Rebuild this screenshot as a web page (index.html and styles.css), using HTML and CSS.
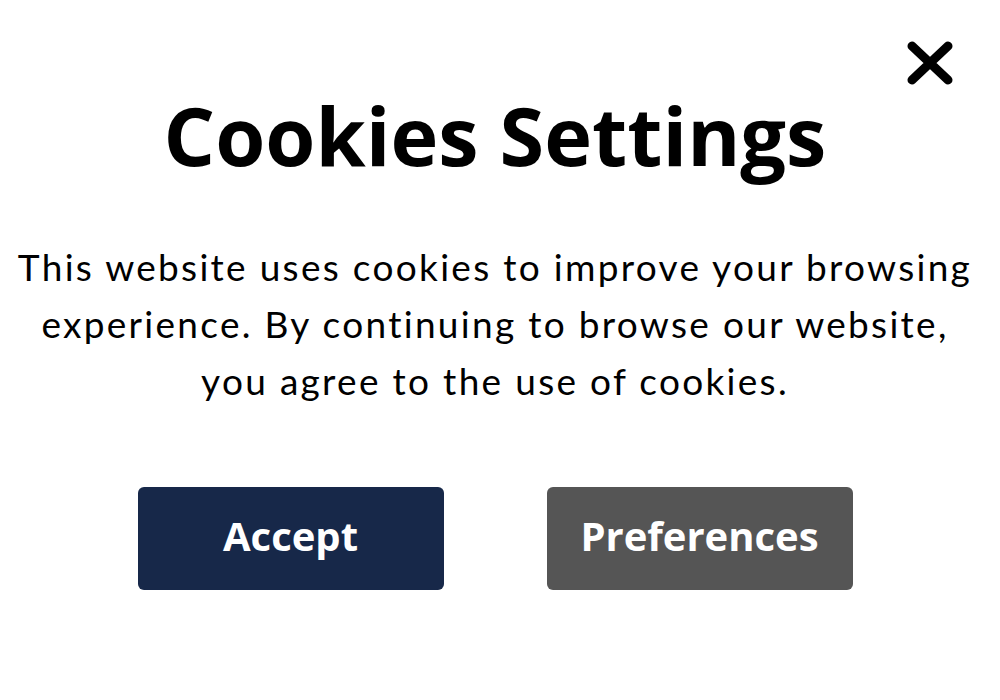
FILE: index.html
```html
<!DOCTYPE html>
<html lang="en">
<head>
<meta charset="utf-8">
<title>Cookies Settings</title>
<link rel="stylesheet" href="styles.css">
</head>
<body>
<div class="modal">
  <button class="close" aria-label="Close">
    <svg width="48" height="44" viewBox="0 0 48 44"><path d="M6 5 L42 39 M42 5 L6 39" stroke="#000" stroke-width="9" stroke-linecap="round" fill="none"/></svg>
  </button>
  <h1 class="title">Cookies Settings</h1>
  <p class="text">This website uses cookies to improve your browsing<br>experience. By continuing to browse our website,<br>you agree to the use of cookies.</p>
  <div class="actions">
    <button class="btn btn-accept">Accept</button>
    <button class="btn btn-prefs">Preferences</button>
  </div>
</div>
</body>
</html>
```
FILE: styles.css
```css
html, body {
  margin: 0;
  padding: 0;
  background: #fff;
}
.modal {
  position: relative;
  width: 990px;
  height: 700px;
  display: flex;
  flex-direction: column;
  align-items: center;
}
.close {
  position: absolute;
  top: 41px;
  left: 906px;
  padding: 0;
  border: 0;
  background: none;
  line-height: 0;
}
.title {
  margin: 85px 0 0;
  font-family: "Open Sans", sans-serif;
  font-weight: 700;
  font-size: 81px;
  line-height: 100px;
  color: #000;
}
.text {
  margin: 53px 0 0;
  width: 990px;
  font-family: "Lato", sans-serif;
  font-size: 37px;
  letter-spacing: 2.3px;
  line-height: 57px;
  text-align: center;
  color: #000;
}
.actions {
  margin-top: 78px;
  display: flex;
  gap: 103px;
}
.btn {
  width: 306px;
  height: 103px;
  padding: 0 0 6px;
  border: 0;
  border-radius: 6px;
  color: #fff;
  font-family: "Open Sans", sans-serif;
  font-weight: 700;
  font-size: 40px;
}
.btn-accept { background: #172849; }
.btn-prefs { background: #555555; }
```
